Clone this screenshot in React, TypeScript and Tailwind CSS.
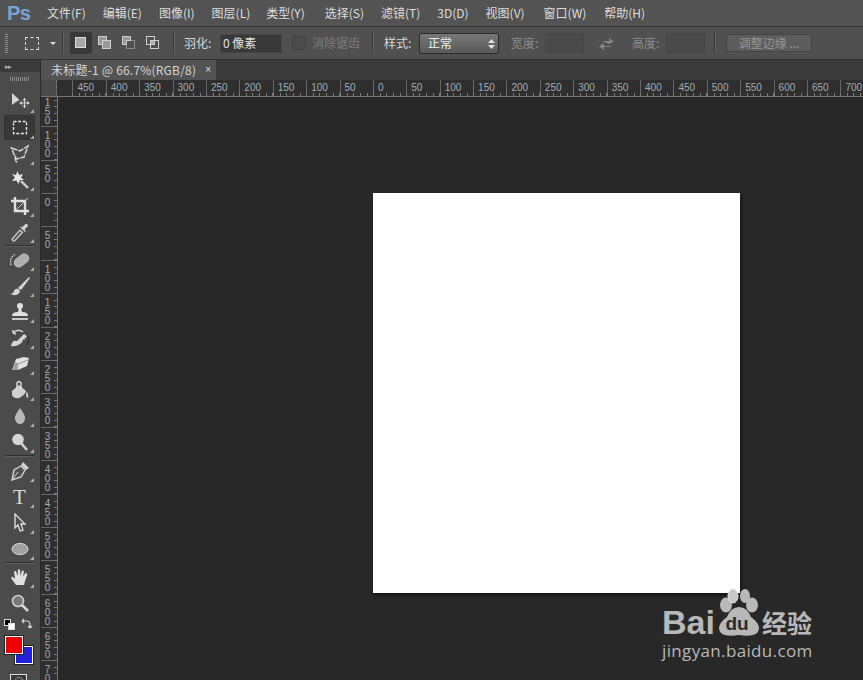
import type { ReactNode } from "react";

const CJK = "font-['Noto_Sans_CJK_SC','Liberation_Sans',sans-serif]";

const MENUS = [
  { label: "文件(F)", ml: "ml-[17px]" },
  { label: "编辑(E)", ml: "ml-[17px]" },
  { label: "图像(I)", ml: "ml-[17px]" },
  { label: "图层(L)", ml: "ml-[17px]" },
  { label: "类型(Y)", ml: "ml-[16px]" },
  { label: "选择(S)", ml: "ml-[20px]" },
  { label: "滤镜(T)", ml: "ml-[17px]" },
  { label: "3D(D)", ml: "ml-[17px]" },
  { label: "视图(V)", ml: "ml-[17px]" },
  { label: "窗口(W)", ml: "ml-[19px]" },
  { label: "帮助(H)", ml: "ml-[18px]" },
];

const H_LABELS = [450, 400, 350, 300, 250, 200, 150, 100, 50, 0, 50, 100, 150, 200, 250, 300, 350, 400, 450, 500, 550, 600, 650, 700];
const V_LABELS = [150, 100, 50, 0, 50, 100, 150, 200, 250, 300, 350, 400, 450, 500, 550, 600, 650, 700];

function Icon({ children, size = 20 }: { children: ReactNode; size?: number }) {
  return (
    <svg width={size} height={size} viewBox="0 0 20 20" fill="none">
      {children}
    </svg>
  );
}

const c = "#d4d4d4";

const TOOLS: Array<{ key: string; icon: ReactNode; sepAfter?: boolean; gap?: boolean }> = [
  {
    key: "move",
    icon: (
      <Icon>
        <path d="M2 1 L2 13 L6 10 L9.5 8 Z" fill={c} />
        <path d="M14.5 6 V16 M9.5 11 H19.5" stroke={c} strokeWidth="1" />
        <path d="M14.5 6 l-2 2.5 h4 Z M14.5 16 l-2 -2.5 h4 Z M9.5 11 l2.5 -2 v4 Z M19.5 11 l-2.5 -2 v4 Z" fill={c} />
      </Icon>
    ),
  },
  {
    key: "marquee",
    icon: (
      <Icon>
        <rect x="3.5" y="3.5" width="13" height="12" stroke="#e8e8e8" strokeWidth="1.3" strokeDasharray="3 1.6" />
      </Icon>
    ),
  },
  {
    key: "lasso",
    icon: (
      <Icon>
        <path d="M1.5 4 L10 7 L18 2 L14 13 L6 15 Z" stroke={c} strokeWidth="1.5" strokeDasharray="6 1" />
        <path d="M6 12 q-2 3 1 6.5" stroke={c} strokeWidth="1.4" />
      </Icon>
    ),
  },
  {
    key: "wand",
    icon: (
      <Icon>
        <path d="M11 11 L18 18" stroke={c} strokeWidth="2.4" />
        <path d="M7.5 1 L9 5 L13 4 L11 7.5 L14 10 L10 10 L8.5 14 L6.5 10.5 L2 11 L5 7.5 L2 4 L6 5 Z" fill="#e8e8e8" />
      </Icon>
    ),
  },
  {
    key: "crop",
    icon: (
      <Icon>
        <path d="M5 1 V15 H19 M1 5 H15 V19" stroke="#e0e0e0" strokeWidth="2.4" />
        <path d="M5 15 L18 2" stroke={c} strokeWidth="1" />
      </Icon>
    ),
  },
  {
    key: "eyedropper",
    icon: (
      <Icon>
        <path d="M3 19 L2 17 L10 8 L12.5 10.5 L4.5 19 Z" fill="#5a5a5a" stroke={c} strokeWidth="1.2" />
        <path d="M10 5 L15 10 L16 9 L14.5 7.5 L18 4 Q18 1.5 15.5 2 L12 5.5 L11 4.5 Z" fill={c} />
      </Icon>
    ),
    sepAfter: true,
  },
  {
    key: "heal",
    icon: (
      <Icon>
        <rect x="3" y="5.5" width="17" height="10" rx="5" transform="rotate(-38 11.5 10.5)" fill="#b0b0b0" />
        <path d="M1 15 Q-1 7 6 4" stroke="#e8e8e8" strokeWidth="1.3" strokeDasharray="1.5 1.2" />
        <path d="M8 10 h.1 M11 8 h.1 M10 13 h.1 M13 11 h.1 M7 14 h.1 M14 7 h.1" stroke="#4a4a4a" strokeWidth="1.6" />
      </Icon>
    ),
  },
  {
    key: "brush",
    icon: (
      <Icon>
        <path d="M8 12 L19 1 L20 2 L11 14 Z" fill={c} />
        <path d="M9 13 Q5 12 4 15 Q3 18 0 18 Q7 21 10 16 Z" fill={c} />
      </Icon>
    ),
  },
  {
    key: "stamp",
    icon: (
      <Icon>
        <circle cx="10" cy="4" r="3" fill="#e0e0e0" />
        <path d="M9 6 H11 L12 10 Q18 10 18 14 H2 Q2 10 8 10 Z" fill="#e0e0e0" />
        <path d="M2 17 H18" stroke="#e8e8e8" strokeWidth="1.6" />
      </Icon>
    ),
  },
  {
    key: "history",
    icon: (
      <Icon>
        <path d="M1 18 Q2 12 7 13 L14 6 L18 9 L10 16 Q5 19 1 18 Z" fill={c} />
        <path d="M3 5 Q8 0 13 4 M3 5 L3 2 M3 5 L6 6" stroke={c} strokeWidth="1.5" />
        <path d="M13 13 L18 8 L19 13 L16 18" stroke="#222" strokeWidth="1.4" strokeDasharray="1.5 1" />
      </Icon>
    ),
  },
  {
    key: "eraser",
    icon: (
      <Icon>
        <path d="M6 5 L14 3 L19 4 L17 12 L8 16 L2 16 Z" fill="#e0e0e0" />
        <path d="M2 16 L5 9 L8 10 L8 16 Z" fill="#a0a0a0" />
        <path d="M5 9 L8 10 L18 6" stroke="#888" strokeWidth=".8" />
      </Icon>
    ),
  },
  {
    key: "bucket",
    icon: (
      <Icon>
        <path d="M2 11 L9 5 L16 11 Q15 15 9 18 Q4 19 2 15 Z" fill="#d0d0d0" />
        <path d="M7 9 V3 Q9 0 11 3 V9" stroke="#e0e0e0" strokeWidth="1.4" />
        <path d="M17 12 Q19 15 18 18 Q16 18 16 13 Z" fill="#d0d0d0" />
      </Icon>
    ),
  },
  {
    key: "smudge",
    icon: (
      <Icon>
        <path d="M10 2 Q16 10 15 13 Q14 18 10 18 Q6 18 5 13 Q4 10 10 2 Z" fill="#b8b8b8" />
      </Icon>
    ),
  },
  {
    key: "dodge",
    icon: (
      <Icon>
        <circle cx="8" cy="7.5" r="5.8" fill="#d4d4d4" />
        <path d="M11 11 L17 18" stroke={c} strokeWidth="2.6" />
      </Icon>
    ),
    sepAfter: true,
    gap: true,
  },
  {
    key: "pen",
    icon: (
      <Icon>
        <path d="M2 19 L4 9 L11 5 L15 9 L11 16 Z" fill="#505050" stroke={c} strokeWidth="1.4" />
        <path d="M2 19 L8 11" stroke={c} strokeWidth="1" />
        <path d="M11 4 L13 1 L19 7 L16 9 Z" fill={c} />
      </Icon>
    ),
  },
  {
    key: "type",
    icon: <span className="font-['Liberation_Serif',serif] text-[21px] leading-[20px] text-[#d8d8d8]">T</span>,
  },
  {
    key: "path",
    icon: (
      <Icon>
        <path d="M5 1 L5 15 L8 12 L10 18 L13 17 L11 11 L15 11 Z" fill="#505050" stroke="#e0e0e0" strokeWidth="1.3" />
      </Icon>
    ),
  },
  {
    key: "ellipse",
    icon: (
      <Icon>
        <ellipse cx="10" cy="10" rx="8" ry="5.6" fill="#a0a0a0" stroke="#d8d8d8" strokeWidth="1" />
      </Icon>
    ),
    sepAfter: true,
  },
  {
    key: "hand",
    icon: (
      <Icon>
        <path d="M6 18 L1 11 L2.5 9.5 L5 12 L4 4.5 L6 4 L7.5 9 L8 2.5 L10 2.5 L10.5 9 L12 3.5 L14 4 L13 10 L15.5 6 L17.5 7 L15 14 L14 18 Z" fill="#e0e0e0" />
      </Icon>
    ),
  },
  {
    key: "zoom",
    icon: (
      <Icon>
        <circle cx="8" cy="8" r="5.5" fill="#777" stroke="#cfcfcf" strokeWidth="1.6" />
        <path d="M12 12 L18 18" stroke={c} strokeWidth="2.6" />
      </Icon>
    ),
  },
];

function Sep() {
  return <div className="h-[22px] w-px bg-[#3a3a3a] shadow-[1px_0_0_#636363]" />;
}

function ModeIcon({ kind }: { kind: number }) {
  return (
    <svg width="14" height="14" viewBox="0 0 14 14" fill="none">
      {kind === 0 && <rect x="1.5" y="1.5" width="10" height="10" fill="#a8a8a8" stroke="#dcdcdc" />}
      {kind === 1 && (
        <>
          <rect x="0.5" y="0.5" width="8" height="8" fill="#999" stroke="#cfcfcf" />
          <rect x="4.5" y="4.5" width="8" height="8" fill="#999" stroke="#cfcfcf" />
        </>
      )}
      {kind === 2 && (
        <>
          <rect x="4.5" y="4.5" width="8" height="8" stroke="#8a8a8a" />
          <path d="M0.5 8.5 V.5 H8.5 V4.5 H4.5 V8.5 Z" fill="#999" stroke="#cfcfcf" />
        </>
      )}
      {kind === 3 && (
        <>
          <rect x="0.5" y="0.5" width="8" height="8" stroke="#cfcfcf" />
          <rect x="4.5" y="4.5" width="8" height="8" stroke="#cfcfcf" />
          <rect x="5" y="5" width="3" height="3" fill="#aaa" />
        </>
      )}
    </svg>
  );
}

function HorizontalRuler() {
  return (
    <div className="flex h-[17px] shrink-0 border-b border-[#757575] bg-[#2f2f2f]">
      <div className="h-full w-[16px] shrink-0 border-r border-dotted border-[#8a8a8a] bg-[#4a4a4a]" />
      <div className="flex overflow-hidden pl-[15.4px]">
        {H_LABELS.map((n, i) => (
          <div key={i} className="relative h-full w-[33.4px] shrink-0 border-l border-[#666]">
            <span className="block pl-[4px] pt-[1px] font-['Liberation_Sans',sans-serif] text-[10px] leading-[13px] text-[#a3abb3]">{n}</span>
            <div className="absolute bottom-0 left-[-1px] h-[3px] w-[33.4px] bg-[repeating-linear-gradient(90deg,#7a7a7a_0,#7a7a7a_1px,transparent_1px,transparent_6.68px)]" />
          </div>
        ))}
      </div>
    </div>
  );
}

function VerticalRuler() {
  return (
    <div className="w-[17px] shrink-0 overflow-hidden border-r border-[#757575] bg-[#2f2f2f]">
      <div className="mt-[-4.2px]">
        {V_LABELS.map((n, i) => (
          <div key={i} className="relative h-[33.4px] w-full border-t border-[#666]">
            <span className="block pl-[1px] pt-[3px] font-['Liberation_Sans',sans-serif] text-[10px] leading-[11px] tracking-[-2.2px] text-[#a3abb3] [text-orientation:upright] [writing-mode:vertical-lr]">
              {n}
            </span>
            <div className="absolute right-0 top-[-1px] h-[33.4px] w-[3px] bg-[repeating-linear-gradient(180deg,#7a7a7a_0,#7a7a7a_1px,transparent_1px,transparent_6.68px)]" />
          </div>
        ))}
      </div>
    </div>
  );
}

function Toolbar() {
  return (
    <aside className="flex w-[41px] shrink-0 flex-col items-center border-r border-[#2a2a2a] bg-[#4b4b4b]">
      <div className="flex h-[12px] w-full items-center bg-[#3a3a3a] pl-[5px] text-[7px] leading-none tracking-[-1px] text-[#b5b5b5]">
        ▸▸
      </div>
      <div className="mt-[5px] h-[4px] w-[20px] bg-[repeating-linear-gradient(90deg,#8c8c8c_0,#8c8c8c_1px,transparent_1px,transparent_2px)]" />
      <div className="mt-[8px] flex w-full flex-col items-center pr-[1px]">
        {TOOLS.map((t) => (
          <div key={t.key} className="flex w-full flex-col items-center">
            <div
              className={`relative flex h-[25px] w-[31px] items-center justify-center rounded-[2px] ${
                t.key === "marquee" ? "bg-[#383838] shadow-[inset_0_0_0_1px_#333]" : ""
              }`}
            >
              {t.icon}
              {t.key !== "zoom" ? (
                <div className="absolute bottom-[1px] right-[1px] h-0 w-0 border-b-[4px] border-l-[4px] border-b-[#b0b0b0] border-l-transparent" />
              ) : null}
            </div>
            <div className="h-px" />
            {t.sepAfter ? <div className={`h-px w-[29px] bg-[#2f2f2f] shadow-[0_1px_0_#5f5f5f] ${t.gap ? "mb-[2px]" : "mb-[1px]"}`} /> : null}
          </div>
        ))}
      </div>
      {/* colour chips */}
      <div className="relative mt-[3px] h-[60px] w-full">
        <div className="absolute left-[4px] top-[0px] h-[7px] w-[7px] border border-[#ddd] bg-black" />
        <div className="absolute left-[8px] top-[4px] h-[7px] w-[7px] border border-[#ddd] bg-white" />
        <svg className="absolute left-[21px] top-[-1px]" width="12" height="12" viewBox="0 0 12 12" fill="none">
          <path d="M1 3 H6 Q9 3 9 7 V10 M1 3 l2 -2 M1 3 l2 2 M9 10 l-2 -2 M9 10 l2 -2" stroke="#d8d8d8" strokeWidth="1.2" />
        </svg>
        <div className="absolute left-[15px] top-[27px] h-[18px] w-[18px] border-[1.5px] border-white bg-[#2222dd] shadow-[0_0_0_1px_#222]" />
        <div className="absolute left-[5px] top-[17px] h-[18px] w-[18px] border-[1.5px] border-white bg-[#ee0000] shadow-[0_0_0_1px_#222]" />
        <div className="absolute left-[10px] top-[55px] flex h-[14px] w-[17px] items-center justify-center border border-[#ddd] bg-[#3a3a3a]">
          <div className="h-[8px] w-[8px] rounded-full border border-dotted border-[#ddd]" />
        </div>
      </div>
    </aside>
  );
}

function Watermark() {
  return (
    <div className="pointer-events-none absolute left-[662px] top-[588px] h-[74px] w-[155px] text-[#b8b8b8]">
      <span className="absolute left-0 top-[16px] font-['Liberation_Sans',sans-serif] text-[34px] font-bold leading-[36px]">Bai</span>
      <svg className="absolute left-[50px] top-0" width="50" height="50" viewBox="0 0 50 50">
        <ellipse cx="14" cy="17" rx="6" ry="7.5" fill="#b8b8b8" />
        <ellipse cx="21" cy="8" rx="5" ry="7" fill="#c9c9c9" stroke="#e8e8e8" />
        <ellipse cx="33" cy="8" rx="5" ry="7" fill="#b8b8b8" />
        <ellipse cx="40" cy="17" rx="6" ry="7.5" fill="#b8b8b8" />
        <path d="M27 19 Q19 19 15 29 Q3 38 9 45 Q14 49 27 47 Q40 49 45 45 Q51 38 39 29 Q35 19 27 19 Z" fill="#b8b8b8" />
      </svg>
      <span className="absolute left-[57px] top-[25px] w-[36px] text-center font-['Liberation_Sans',sans-serif] text-[19px] font-bold leading-[22px] text-[#2b2b2b]">du</span>
      <span className={`absolute left-[100px] top-[20px] ${CJK} text-[25px] font-bold leading-[28px]`}>经验</span>
      <span className="absolute left-0 top-[52px] font-['Open_Sans',sans-serif] text-[17px] leading-[22px] tracking-[0.35px]">jingyan.baidu.com</span>
    </div>
  );
}

export default function App() {
  return (
    <div className={`relative flex h-[680px] w-[863px] flex-col overflow-hidden bg-[#535353] ${CJK}`}>
      {/* menu bar */}
      <header className="flex h-[27px] shrink-0 items-center border-b border-[#333] text-[12px] text-[#dedede]">
        <span className="ml-[7px] w-[23px] font-['Liberation_Sans',sans-serif] text-[20px] font-bold leading-none tracking-[-0.5px] text-[#7aa3cf]">Ps</span>
        {MENUS.map((m) => (
          <span key={m.label} className={`${m.ml} whitespace-nowrap`}>
            {m.label}
          </span>
        ))}
      </header>

      {/* options bar */}
      <div className="flex h-[33px] shrink-0 items-center border-b border-[#2e2e2e] bg-[#505050] text-[12px] text-[#d8d8d8]">
        <div className="ml-[5px] h-[19px] w-[3px] bg-[repeating-linear-gradient(180deg,#8c8c8c_0,#8c8c8c_1px,transparent_1px,transparent_2px)]" />
        <div className="ml-[17px] h-[13px] w-[14px] border border-dashed border-[#dcdcdc]" />
        <div className="ml-[11px] h-0 w-0 border-x-[3px] border-t-[3px] border-x-transparent border-t-[#dcdcdc]" />
        <div className="ml-[6px]"><Sep /></div>
        <div className="ml-[7px] flex h-[22px] w-[22px] items-center justify-center rounded-[2px] bg-[#383838]">
          <ModeIcon kind={0} />
        </div>
        <div className="ml-[6px]"><ModeIcon kind={1} /></div>
        <div className="ml-[10px]"><ModeIcon kind={2} /></div>
        <div className="ml-[10px]"><ModeIcon kind={3} /></div>
        <div className="ml-[13px]"><Sep /></div>
        <span className="ml-[10px] w-[30px] whitespace-nowrap">羽化:</span>
        <div className="ml-[6px] flex h-[19px] w-[62px] items-center border border-[#444] bg-[#393939] pl-[2px] text-[#e4e4e4]">0 像素</div>
        <div className="ml-[10px] h-[14px] w-[14px] rounded-[2px] border border-[#444] bg-[#4b4b4b]" />
        <span className="ml-[6px] w-[48px] whitespace-nowrap text-[#7d7d7d]">消除锯齿</span>
        <div className="ml-[12px]"><Sep /></div>
        <span className="ml-[11px] w-[30px] whitespace-nowrap">样式:</span>
        <div className="relative ml-[5px] flex h-[21px] w-[80px] items-center rounded-[2px] border border-[#2b2b2b] bg-gradient-to-b from-[#777] to-[#5a5a5a] pl-[8px] text-[#eee]">
          正常
          <svg className="absolute right-[3px] top-[5px]" width="7" height="10" viewBox="0 0 7 10">
            <path d="M3.5 0 L7 4 H0 Z M3.5 10 L7 6 H0 Z" fill="#e0e0e0" />
          </svg>
        </div>
        <span className="ml-[12px] w-[30px] whitespace-nowrap text-[#8c8c8c]">宽度:</span>
        <div className="ml-[4px] h-[20px] w-[39px] border border-[#454545] bg-[#4a4a4a]" />
        <svg className="ml-[15px]" width="15" height="13" viewBox="0 0 15 13">
          <path d="M3 4 H10 V1 L15 4.5 L10 7 Z M12 9 H5 V6 L0 9.5 L5 13 V10 H12 Z" fill="#838383" />
        </svg>
        <span className="ml-[18px] w-[30px] whitespace-nowrap text-[#8c8c8c]">高度:</span>
        <div className="ml-[4px] h-[20px] w-[39px] border border-[#454545] bg-[#4a4a4a]" />
        <div className="ml-[9px]"><Sep /></div>
        <div className="ml-[11px] flex h-[18px] w-[86px] items-center justify-center rounded-[2px] border border-[#444] bg-[#5c5c5c] text-[#969696]">调整边缘 ...</div>
      </div>

      {/* workspace */}
      <div className="flex min-h-0 flex-1">
        <Toolbar />
        <main className="flex min-w-0 flex-1 flex-col">
          <div className="flex h-[20px] shrink-0 bg-[#3a3a3a]">
            <div className="flex w-[175px] items-center bg-[#535353] pl-[10px] text-[12px] tracking-[0.2px] text-[#d4d4d4]">
              <span className="whitespace-nowrap">未标题-1 @ 66.7%(RGB/8)</span>
              <span className="ml-[9px] font-['Liberation_Sans',sans-serif] text-[10px] leading-none text-[#e0e0e0]">×</span>
            </div>
          </div>
          <HorizontalRuler />
          <div className="flex min-h-0 flex-1">
            <VerticalRuler />
            <div className="min-w-0 flex-1 bg-[#282828] pl-[315px] pt-[96px]">
              <div className="h-[400px] w-[367px] bg-white shadow-[1px_2px_4px_rgba(0,0,0,0.6)]" />
            </div>
          </div>
        </main>
      </div>

      <Watermark />
    </div>
  );
}
